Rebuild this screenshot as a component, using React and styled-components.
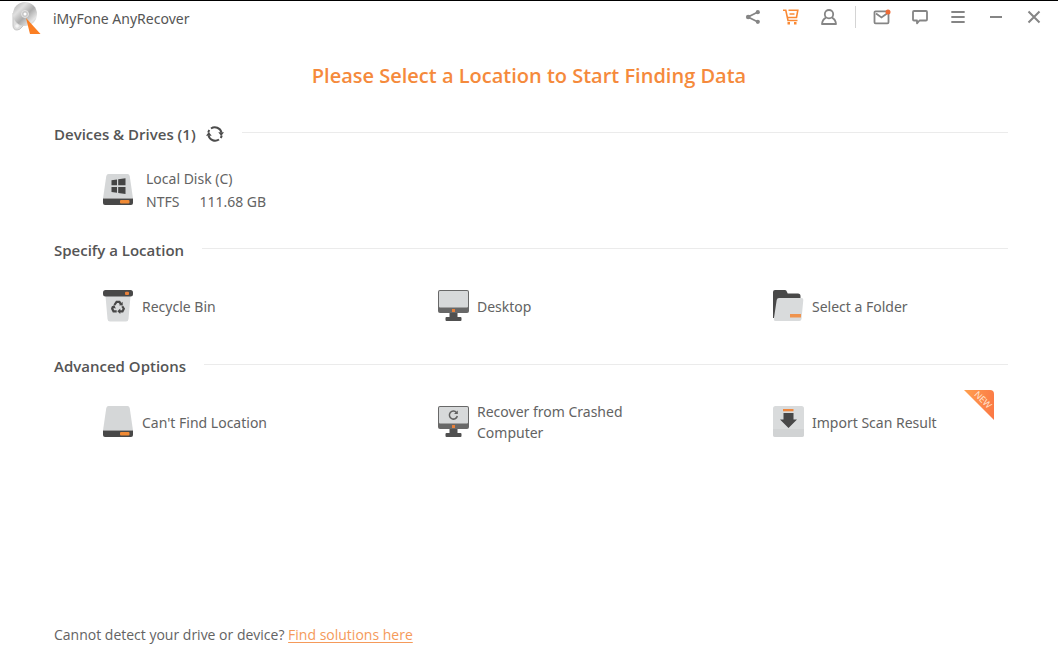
import React from "react";
import styled, { createGlobalStyle } from "styled-components";

const GlobalStyle = createGlobalStyle`
  * {
    box-sizing: border-box;
  }
  body {
    margin: 0;
    background-color: #ffffff;
    color: #636363;
    font-family: "Open Sans", "Noto Sans", sans-serif;
    font-size: 14px;
  }
  button {
    border: none;
    background: none;
    padding: 0;
    color: inherit;
    font: inherit;
    cursor: pointer;
  }
  svg {
    display: block;
    flex-shrink: 0;
  }
`;
const Window = styled.div`
  min-height: 100vh;
  display: flex;
  flex-direction: column;
  border-top: 1px solid #000000;
`;
const TitleBar = styled.header`
  display: flex;
  align-items: center;
  justify-content: space-between;
  height: 34px;
  padding: 0 5px 0 10px;
`;
const Brand = styled.div`
  display: flex;
  align-items: center;
  gap: 10px;
  font-family: "Noto Sans", sans-serif;
  color: #555555;
`;
const Tools = styled.div`
  display: flex;
  align-items: center;
  align-self: flex-start;
`;
const ToolButton = styled.button`
  width: 38px;
  height: 32px;
  display: flex;
  align-items: center;
  justify-content: center;
  color: ${(props) => (props.$active ? "#fa8a35" : "#858585")};
`;
const Divider = styled.div`
  width: 1px;
  height: 22px;
  margin: 0 7px;
  background-color: #d4d4d4;
`;
const Title = styled.h1`
  margin: 27px 0 34px;
  text-align: center;
  font-size: 20px;
  line-height: 28px;
  font-weight: 600;
  color: #f58a3c;
`;
const Section = styled.section`
  margin-bottom: 18px;
`;
const SectionHead = styled.div`
  display: flex;
  align-items: center;
  height: 20px;
  padding: 0 50px 0 54px;
`;
const SectionTitle = styled.h2`
  margin: 0;
  font-size: 15px;
  line-height: 20px;
  font-weight: 600;
  color: #555555;
`;
const RefreshButton = styled.button`
  margin-left: 10px;
`;
const Line = styled.div`
  flex: 1;
  height: 1px;
  margin: 0 0 4px 18px;
  background-color: #ebebeb;
`;
const Cards = styled.div`
  display: grid;
  grid-template-columns: repeat(3, 1fr);
  column-gap: 75px;
  padding: 14px 64px 0;
`;
const Card = styled.button`
  position: relative;
  display: flex;
  align-items: center;
  gap: ${(props) => (props.$wide ? "12px" : "8px")};
  height: 64px;
  padding-left: 38px;
  text-align: left;
  font-family: "Noto Sans", sans-serif;
  line-height: 21px;
`;
const DiskInfo = styled.span`
  display: grid;
  grid-template-columns: auto auto;
  column-gap: 20px;
  line-height: 23px;
`;
const DiskName = styled.span`
  grid-column: 1 / -1;
`;
const Ribbon = styled.span`
  position: absolute;
  top: 0;
  right: 0;
  width: 30px;
  height: 30px;
  border-top-right-radius: 4px;
  background: linear-gradient(100deg, #ffa04f, #fb7745);
  clip-path: polygon(0 0, 100% 0, 100% 100%);
`;
const RibbonText = styled.span`
  position: absolute;
  top: 5px;
  right: -2px;
  width: 26px;
  text-align: center;
  font-size: 9px;
  line-height: 10px;
  color: #ffe3cf;
  transform: rotate(45deg);
`;
const Footer = styled.footer`
  margin-top: auto;
  padding: 0 54px 19px;
  line-height: 20px;
`;
const Link = styled.a`
  color: #f59a5a;
  text-decoration: underline;
  text-underline-offset: 2px;
`;

const Logo = () => (
  <svg width="33" height="34" viewBox="0 0 33 34">
    <defs>
      <linearGradient id="disc" x1="0" y1="0" x2="1" y2="1">
        <stop offset="0" stopColor="#a9a9a9" />
        <stop offset="0.3" stopColor="#e0e0e0" />
        <stop offset="0.55" stopColor="#acacac" />
        <stop offset="0.8" stopColor="#e6e6e6" />
        <stop offset="1" stopColor="#a8a8a8" />
      </linearGradient>
    </defs>
    <path d="M3 12v12q0 5 4 5 3 0 5-3l4-5z" fill="#dedede" stroke="#c4c4c4" />
    <circle cx="15" cy="13" r="12" fill="url(#disc)" />
    <circle cx="15" cy="13" r="3.500" fill="#c6c6c6" stroke="#e4e4e4" />
    <circle cx="15" cy="13" r="1.5" fill="#ffffff" />
    <circle cx="7" cy="25" r="1.800" fill="#f4f4f4" />
    <path d="M16 17l14.500 16H20z" fill="#fb7f24" />
  </svg>
);

const ShareIcon = () => (
  <svg width="16" height="16" viewBox="0 0 16 16" fill="currentColor">
    <path d="M13 3L3 8l10 5" fill="none" stroke="currentColor" strokeWidth="1.8" />
    <circle cx="12.800" cy="3.200" r="2.100" />
    <circle cx="3.200" cy="8" r="2.300" />
    <circle cx="12.800" cy="12.800" r="2.100" />
  </svg>
);

const CartIcon = () => (
  <svg width="16" height="16" viewBox="0 0 16 16" fill="none" stroke="currentColor" strokeWidth="1.600">
    <path d="M0 1.300h2.800L5 11.500h9.500M5.500 1.300h9.300L13.500 8.500H4.500M6.500 5h5" />
    <rect x="4.500" y="13" width="2.500" height="2.500" fill="currentColor" stroke="none" />
    <rect x="11" y="13" width="2.500" height="2.500" fill="currentColor" stroke="none" />
  </svg>
);

const UserIcon = () => (
  <svg width="16" height="16" viewBox="0 0 16 16" fill="none" stroke="currentColor" strokeWidth="1.800" strokeLinejoin="round">
    <circle cx="8" cy="5.200" r="4.200" />
    <path d="M5 8.600C2.700 9.700 1.300 11.800 1 15h14c-.3-3.200-1.700-5.300-4-6.400" />
  </svg>
);

const MailIcon = () => (
  <svg width="18" height="16" viewBox="0 0 18 16" fill="none" stroke="currentColor" strokeWidth="1.800">
    <rect x="1.500" y="2.300" width="14" height="12" rx="1" />
    <path d="M3 4.500l5.500 4L14 4.500" />
    <circle cx="15" cy="3" r="2.500" fill="#ee6a35" stroke="none" />
  </svg>
);

const ChatIcon = () => (
  <svg width="16" height="16" viewBox="0 0 16 16" fill="none" stroke="currentColor" strokeWidth="1.800" strokeLinejoin="round">
    <path d="M2 2h12q1 0 1 1v7.500q0 1-1 1H7.500L5 14.300V11.500H2q-1 0-1-1V3q0-1 1-1z" />
  </svg>
);

const MenuIcon = () => (
  <svg width="14" height="14" viewBox="0 0 14 14" stroke="currentColor" strokeWidth="1.800" strokeLinecap="round">
    <path d="M1 2h12M1 7h12M1 12h12" />
  </svg>
);

const MinimizeIcon = () => (
  <svg width="14" height="14" viewBox="0 0 14 14" stroke="currentColor" strokeWidth="2">
    <path d="M1 7h12" />
  </svg>
);

const CloseIcon = () => (
  <svg width="14" height="14" viewBox="0 0 14 14" stroke="currentColor" strokeWidth="2">
    <path d="M1.500 1.500l11 11M12.500 1.500l-11 11" />
  </svg>
);

const RefreshIcon = () => (
  <svg width="18" height="18" viewBox="0 0 18 18" fill="none" stroke="#4c4c4c" strokeWidth="2">
    <path d="M5 3.500A6.800 6.800 0 0 1 15.500 7.500M13 14.500A6.800 6.800 0 0 1 2.500 10.500" />
    <path d="M2.300 7.500A6.800 6.800 0 0 1 3.300 5M15.700 10.500A6.800 6.800 0 0 1 14.700 13" />
    <path d="M12.300 7.300H18l-2.800 3.700zM0 10.700h5.700L2.800 7z" fill="#4c4c4c" stroke="none" />
  </svg>
);

const DriveIcon = ({ windows }) => (
  <svg width="32" height="32" viewBox="0 0 32 32">
    <path d="M6.500 0h19q1.800 0 2.200 2L31 24.500H1L4.300 2q.4-2 2.200-2z" fill="#d5d7d8" />
    <path d="M1 24.500h30V29q0 2-2 2H3q-2 0-2-2z" fill="#484848" />
    <rect x="18" y="26" width="9.500" height="3.500" rx="1" fill="#f08a35" />
    {windows && (
      <path
        d="M9.500 6.300l5.500-.8v5.800H9.500zM16.200 5.300l7.300-1.100v7.100h-7.300zM9.500 13H15v5.800l-5.500-.8zM16.200 13h7.300v7.100L16.200 19z"
        fill="#454545"
      />
    )}
  </svg>
);

const BinIcon = () => (
  <svg width="32" height="32" viewBox="0 0 32 32">
    <path d="M3.500 6h25L26.500 29q-.2 2.500-2.500 2.500H8Q5.700 31.500 5.500 29z" fill="#d9dbdc" />
    <rect x="1" y="0" width="30" height="6.500" rx="2.500" fill="#484848" />
    <rect x="23" y="1.700" width="4" height="3.300" rx="1" fill="#e8803a" />
    <g fill="none" stroke="#484848" strokeWidth="2.200">
      <path d="M12.400 15l2.200-3.200h2.800l1.500 2.400" />
      <path d="M20.300 16.200l1.500 2.600-1.300 2.500h-3.200" />
      <path d="M14.700 21.300h-3.200l-1.300-2.500 1.300-2.200" />
    </g>
    <path d="M17 15.300l3.800.3-.2-3.800zM18.300 18.500v5.400l-3-2.700zM8.800 17.200l3.500-2.300 1.500 3.700z" fill="#484848" />
  </svg>
);

const MonitorIcon = ({ reload }) => (
  <svg width="32" height="32" viewBox="0 0 32 32">
    <path d="M12.500 22h8v5h3q1 0 1 1v2q0 1-1 1h-14q-1 0-1-1v-2q0-1 1-1h3z" fill="#505050" />
    <rect x="1" y="0" width="31" height="23" rx="2" fill="#686868" />
    <rect x="2" y="1" width="29" height="16.500" rx="1" fill="#d7d9da" />
    <rect x="15" y="19" width="3" height="3" fill="#e8803a" />
    {reload && (
      <>
        <path d="M19.600 6.700a4 4 0 1 0 .7 3.300" fill="none" stroke="#606060" strokeWidth="1.500" />
        <path d="M20.800 4.500V8h-3.800z" fill="#606060" />
      </>
    )}
  </svg>
);

const FolderIcon = () => (
  <svg width="32" height="32" viewBox="0 0 32 32">
    <path d="M1 2q0-2 2-2h10q1.500 0 2 2l.7 1.500H26q2.500 0 2.500 2.500v6L3 28H1z" fill="#484848" />
    <path d="M7 8h22.500q2 0 1.800 2l-1.800 19q-.2 2-2.200 2H3.500q-2 0-1.700-2L4.700 10q.3-2 2.300-2z" fill="#d9dbdc" />
    <rect x="18" y="24" width="11" height="3.500" fill="#ef934d" />
  </svg>
);

const ImportIcon = () => (
  <svg width="32" height="32" viewBox="0 0 32 32">
    <rect x="1" y="0" width="31" height="31" rx="2.500" fill="#d9dbdc" />
    <path d="M1 23h31v5.500q0 2.500-2.500 2.500h-26Q1 31 1 28.500z" fill="#d1d3d4" />
    <rect x="11" y="3" width="10.500" height="2.300" fill="#f0873d" />
    <path d="M11.500 7h10v6.500H25L16.500 22 8 13.500h3.500z" fill="#484848" />
  </svg>
);

const SectionHeader = ({ title, children }) => (
  <SectionHead>
    <SectionTitle>{title}</SectionTitle>
    {children}
    <Line />
  </SectionHead>
);

const App = () => {
  return (
    <>
      <GlobalStyle />
      <Window>
        <TitleBar>
          <Brand>
            <Logo />
            <span>iMyFone AnyRecover</span>
          </Brand>
          <Tools>
            <ToolButton aria-label="Share">
              <ShareIcon />
            </ToolButton>
            <ToolButton aria-label="Buy" $active>
              <CartIcon />
            </ToolButton>
            <ToolButton aria-label="Account">
              <UserIcon />
            </ToolButton>
            <Divider />
            <ToolButton aria-label="Messages">
              <MailIcon />
            </ToolButton>
            <ToolButton aria-label="Feedback">
              <ChatIcon />
            </ToolButton>
            <ToolButton aria-label="Menu">
              <MenuIcon />
            </ToolButton>
            <ToolButton aria-label="Minimize">
              <MinimizeIcon />
            </ToolButton>
            <ToolButton aria-label="Close">
              <CloseIcon />
            </ToolButton>
          </Tools>
        </TitleBar>
        <main>
          <Title>Please Select a Location to Start Finding Data</Title>
          <Section>
            <SectionHeader title="Devices & Drives (1)">
              <RefreshButton aria-label="Refresh drives">
                <RefreshIcon />
              </RefreshButton>
            </SectionHeader>
            <Cards>
              <Card $wide>
                <DriveIcon windows />
                <DiskInfo>
                  <DiskName>Local Disk (C)</DiskName>
                  <span>NTFS</span>
                  <span>111.68 GB</span>
                </DiskInfo>
              </Card>
            </Cards>
          </Section>
          <Section>
            <SectionHeader title="Specify a Location" />
            <Cards>
              <Card>
                <BinIcon />
                <span>Recycle Bin</span>
              </Card>
              <Card>
                <MonitorIcon />
                <span>Desktop</span>
              </Card>
              <Card>
                <FolderIcon />
                <span>Select a Folder</span>
              </Card>
            </Cards>
          </Section>
          <Section>
            <SectionHeader title="Advanced Options" />
            <Cards>
              <Card>
                <DriveIcon />
                <span>Can't Find Location</span>
              </Card>
              <Card>
                <MonitorIcon reload />
                <span>Recover from Crashed Computer</span>
              </Card>
              <Card>
                <ImportIcon />
                <span>Import Scan Result</span>
                <Ribbon>
                  <RibbonText>NEW</RibbonText>
                </Ribbon>
              </Card>
            </Cards>
          </Section>
        </main>
        <Footer>
          Cannot detect your drive or device? <Link href="#solutions">Find solutions here</Link>
        </Footer>
      </Window>
    </>
  );
};

export default App;
